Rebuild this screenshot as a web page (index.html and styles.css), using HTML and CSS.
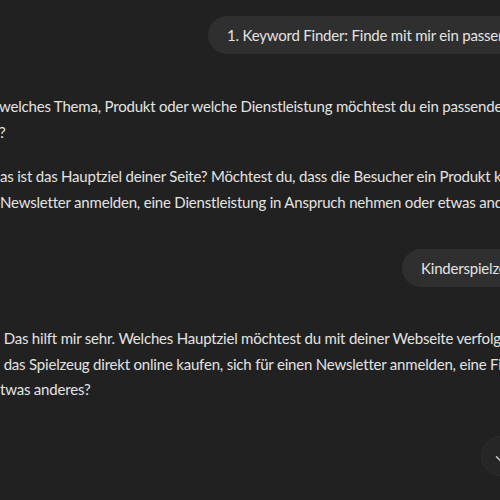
FILE: index.html
```html
<!DOCTYPE html>
<html lang="de">
<head>
<meta charset="utf-8">
<title>Chat</title>
<link rel="stylesheet" href="styles.css">
</head>
<body>
<main class="chat">
  <div class="user-row first">
    <div class="bubble">1. Keyword Finder: Finde mit mir ein passendes Keyword für deine Webseite</div>
  </div>
  <div class="reply r1">
    <div class="line">welches Thema, Produkt oder welche Dienstleistung möchtest du ein passendes Keyword finden</div>
    <div class="line">?</div>
  </div>
  <div class="reply r2">
    <div class="line">as ist das Hauptziel deiner Seite? Möchtest du, dass die Besucher ein Produkt kaufen, sich für einen</div>
    <div class="line">Newsletter anmelden, eine Dienstleistung in Anspruch nehmen oder etwas anderes?</div>
  </div>
  <div class="user-row second">
    <div class="bubble">Kinderspielzeug</div>
  </div>
  <div class="reply r3">
    <div class="line">&nbsp;Das hilft mir sehr. Welches Hauptziel möchtest du mit deiner Webseite verfolgen? Sollen</div>
    <div class="line">&nbsp;das Spielzeug direkt online kaufen, sich für einen Newsletter anmelden, eine Filiale besuchen oder</div>
    <div class="line">twas anderes?</div>
  </div>
</main>
<div class="scroll-btn" role="button" aria-label="Nach unten scrollen">
  <svg width="18" height="18" viewBox="0 0 24 24" fill="none" stroke="#cfcfcf" stroke-width="2" stroke-linecap="round" stroke-linejoin="round"><path d="M12 5v14M6 13l6 6 6-6"/></svg>
</div>
</body>
</html>
```
FILE: styles.css
```css
html, body {
  margin: 0;
  padding: 0;
  width: 500px;
  height: 500px;
  overflow: hidden;
  background: #212121;
}
body {
  font-family: "Lato", "Noto Sans", sans-serif;
  font-size: 15px;
  letter-spacing: -0.2px;
  color: #e3e3e3;
  position: relative;
}
.chat {
  display: flex;
  flex-direction: column;
  width: 900px;
}
.user-row {
  display: flex;
}
.user-row.first {
  padding-left: 208px;
  margin-top: 16px;
}
.user-row.second {
  padding-left: 402px;
  margin-top: 34px;
}
.bubble {
  background: #2f2f2f;
  border-radius: 20px;
  height: 38px;
  line-height: 38px;
  padding: 0 20px 0 19px;
  white-space: nowrap;
}
.reply {
  line-height: 25.5px;
}
.reply .line {
  white-space: nowrap;
}
.r1 { margin-top: 40px; margin-left: -1px; }
.r2 { margin-top: 19px; }
.r3 { margin-top: 39px; }
.scroll-btn {
  position: absolute;
  left: 481px;
  top: 436px;
  width: 40px;
  height: 40px;
  box-sizing: border-box;
  border-radius: 50%;
  background: #262626;
  border: 1px solid #2e2e2e;
  display: flex;
  align-items: center;
  justify-content: center;
}
```
